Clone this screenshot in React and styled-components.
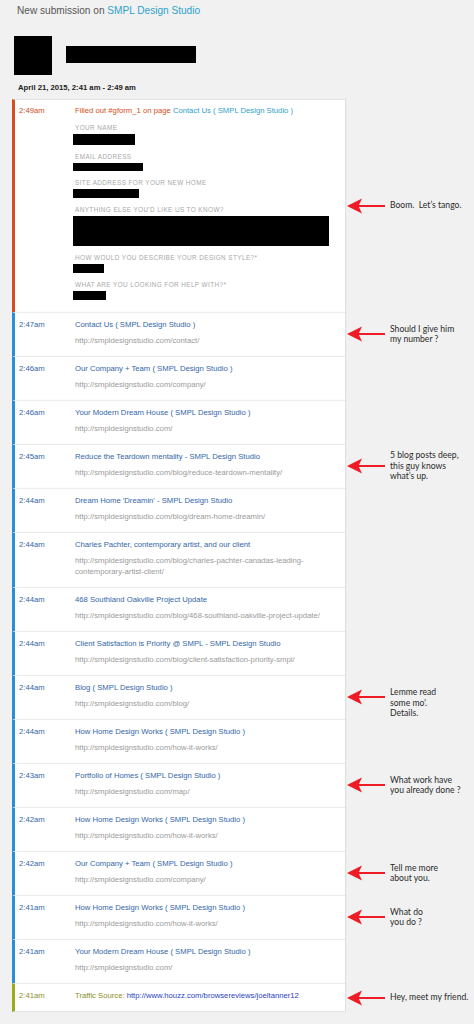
import React from "react";
import styled, { createGlobalStyle } from "styled-components";

const GlobalStyle = createGlobalStyle`
  html, body {
    margin: 0;
    padding: 0;
    background: #f1f1f1;
  }
  body {
    font-family: "Liberation Sans", Arial, sans-serif;
  }
`;

const BLUE = "#3366a8";
const ORANGE = "#d54e21";
const OLIVE = "#9aab1f";

const visits = [
    {time: "2:47am", title: "Contact Us ( SMPL Design Studio )", url: "http://smpldesignstudio.com/contact/", note: ["Should I give him", "my number ?"]},
    {time: "2:46am", title: "Our Company + Team ( SMPL Design Studio )", url: "http://smpldesignstudio.com/company/"},
    {time: "2:46am", title: "Your Modern Dream House ( SMPL Design Studio )", url: "http://smpldesignstudio.com/"},
    {time: "2:45am", title: "Reduce the Teardown mentality - SMPL Design Studio", url: "http://smpldesignstudio.com/blog/reduce-teardown-mentality/", note: ["5 blog posts deep,", "this guy knows", "what\u2019s up."]},
    {time: "2:44am", title: "Dream Home 'Dreamin' - SMPL Design Studio", url: "http://smpldesignstudio.com/blog/dream-home-dreamin/"},
    {time: "2:44am", title: "Charles Pachter, contemporary artist, and our client", url: "http://smpldesignstudio.com/blog/charles-pachter-canadas-leading-contemporary-artist-client/"},
    {time: "2:44am", title: "468 Southland Oakville Project Update", url: "http://smpldesignstudio.com/blog/468-southland-oakville-project-update/"},
    {time: "2:44am", title: "Client Satisfaction is Priority @ SMPL - SMPL Design Studio", url: "http://smpldesignstudio.com/blog/client-satisfaction-priority-smpl/"},
    {time: "2:44am", title: "Blog ( SMPL Design Studio )", url: "http://smpldesignstudio.com/blog/", note: ["Lemme read", "some mo'.", "Details."], lift: true},
    {time: "2:44am", title: "How Home Design Works ( SMPL Design Studio )", url: "http://smpldesignstudio.com/how-it-works/"},
    {time: "2:43am", title: "Portfolio of Homes ( SMPL Design Studio )", url: "http://smpldesignstudio.com/map/", note: ["What work have", "you already done ?"]},
    {time: "2:42am", title: "How Home Design Works ( SMPL Design Studio )", url: "http://smpldesignstudio.com/how-it-works/"},
    {time: "2:42am", title: "Our Company + Team ( SMPL Design Studio )", url: "http://smpldesignstudio.com/company/", note: ["Tell me more", "about you."]},
    {time: "2:41am", title: "How Home Design Works ( SMPL Design Studio )", url: "http://smpldesignstudio.com/how-it-works/", note: ["What do", "you do ?"]},
    {time: "2:41am", title: "Your Modern Dream House ( SMPL Design Studio )", url: "http://smpldesignstudio.com/"},
];

const fields = [
    {label: "Your Name", w: 62, h: 11},
    {label: "Email Address", w: 70, h: 8},
    {label: "Site Address for your new home", w: 66, h: 9},
    {label: "Anything else you'd like us to know?", w: 256, h: 30},
    {label: "How would you describe your design style?*", w: 31, h: 9},
    {label: "What are you looking for help with?*", w: 33, h: 9},
];

function Arrow() {
    return (
        <ArrowSvg viewBox="0 0 38 16">
            <path d="M0 8 L15 0.5 L11.5 8 L15 15.5 Z" fill="#ee1c24" />
            <rect x="10" y="7" width="28" height="2" fill="#ee1c24" />
        </ArrowSvg>
    );
}

function Note({lines, lift}) {
    if (!lines) return <NoteCell />;
    return (
        <NoteCell>
            <Arrow />
            <NoteText $lift={lift}>
                {lines.map((l, i) => <div key={i}>{l}</div>)}
            </NoteText>
        </NoteCell>
    );
}

export default function App() {
    return (
        <>
            <GlobalStyle />
            <Page>
                <Heading>New submission on <a>SMPL Design Studio</a></Heading>
                <Profile>
                    <Avatar />
                    <NameBar />
                </Profile>
                <DateLine>April 21, 2015, 2:41 am - 2:49 am</DateLine>

                <Timeline>
                    <Entry>
                        <Cell $accent={ORANGE} $first>
                            <Time $color={ORANGE}>2:49am</Time>
                            <Body>
                                <Title $color={ORANGE}>Filled out #gform_1 on page <Link>Contact Us ( SMPL Design Studio )</Link></Title>
                                {fields.map((f) => (
                                    <Field key={f.label}>
                                        <Label>{f.label}</Label>
                                        <Redacted $w={f.w} $h={f.h} />
                                    </Field>
                                ))}
                            </Body>
                        </Cell>
                        <Note lines={["Boom.  Let\u2019s tango."]} />
                    </Entry>

                    {visits.map((v, i) => (
                        <Entry key={i}>
                            <Cell $accent="#2b8fd8">
                                <Time $color={BLUE}>{v.time}</Time>
                                <Body>
                                    <Title $color={BLUE}>{v.title}</Title>
                                    <Url>{v.url}</Url>
                                </Body>
                            </Cell>
                            <Note lines={v.note} lift={v.lift} />
                        </Entry>
                    ))}

                    <Entry>
                        <Cell $accent={OLIVE} $last>
                            <Time $color="#8a8f28">2:41am</Time>
                            <Body>
                                <Title $color="#8a8f28">Traffic Source: <Link $color="#2a3fc4">http://www.houzz.com/browsereviews/joeltanner12</Link></Title>
                            </Body>
                        </Cell>
                        <Note lines={["Hey, meet my friend."]} />
                    </Entry>
                </Timeline>
            </Page>
        </>
    );
}

const Page = styled.div`
  padding-top: 4px;
  padding-bottom: 12px;
  width: 474px;
`;

const Heading = styled.div`
  padding-left: 17px;
  font-size: 10.1px;
  line-height: 14px;
  color: #555;

  a {
    color: #2ea2cc;
  }
`;

const Profile = styled.div`
  display: flex;
  align-items: center;
  gap: 14px;
  margin-top: 18px;
  padding-left: 14px;
`;

const Avatar = styled.div`
  width: 38px;
  height: 39px;
  background: #000;
`;

const NameBar = styled.div`
  width: 130px;
  height: 17px;
  background: #000;
  margin-top: -2px;
`;

const DateLine = styled.div`
  margin-top: 8px;
  padding-left: 18px;
  font-size: 7.7px;
  line-height: 10px;
  font-weight: bold;
  color: #222;
`;

const Timeline = styled.div`
  margin-top: 6px;
  padding-left: 12px;
`;

const Entry = styled.div`
  display: grid;
  grid-template-columns: 333px 1fr;
`;

const Cell = styled.div`
  display: grid;
  grid-template-columns: 56px 1fr;
  background: #fff;
  border-left: 3px solid ${p => p.$accent};
  border-top: ${p => p.$first ? "1px solid #e4e4e4" : "1px solid #ececec"};
  box-shadow: 1px 0 1px rgba(0, 0, 0, 0.07);
  padding: ${p => p.$first ? "5px 15px 12px 4px" : "6px 15px 10px 4px"};
  ${p => p.$last && "border-bottom: 1px solid #e8e8e8;"}
`;

const Time = styled.div`
  font-size: 7.7px;
  line-height: 11px;
  color: ${p => p.$color};
`;

const Body = styled.div`
  min-width: 0;
`;

const Title = styled.div`
  font-size: 7.7px;
  line-height: 11px;
  color: ${p => p.$color};
`;

const Link = styled.span`
  color: ${p => p.$color || "#2ea2cc"};
`;

const Url = styled.div`
  margin-top: 5px;
  font-size: 7.7px;
  line-height: 11px;
  color: #9a9a9a;
`;

const Field = styled.div`
  margin-top: 7px;
`;

const Label = styled.div`
  font-size: 6.4px;
  line-height: 9px;
  letter-spacing: 0.4px;
  text-transform: uppercase;
  color: #a8a8a8;
`;

const Redacted = styled.div`
  margin-top: 2px;
  margin-left: -2px;
  width: ${p => p.$w}px;
  height: ${p => p.$h}px;
  background: #000;
`;

const NoteCell = styled.div`
  display: flex;
  align-items: center;
  padding-left: 2px;
`;

const ArrowSvg = styled.svg`
  width: 38px;
  height: 16px;
  flex: none;
`;

const NoteText = styled.div`
  margin-left: 5px;
  font-family: Lato, "Open Sans", sans-serif;
  font-size: 8.6px;
  line-height: 10.5px;
  color: #2a2a2a;
  white-space: pre;
  ${p => p.$lift && "margin-top: 12px;"}
`;
